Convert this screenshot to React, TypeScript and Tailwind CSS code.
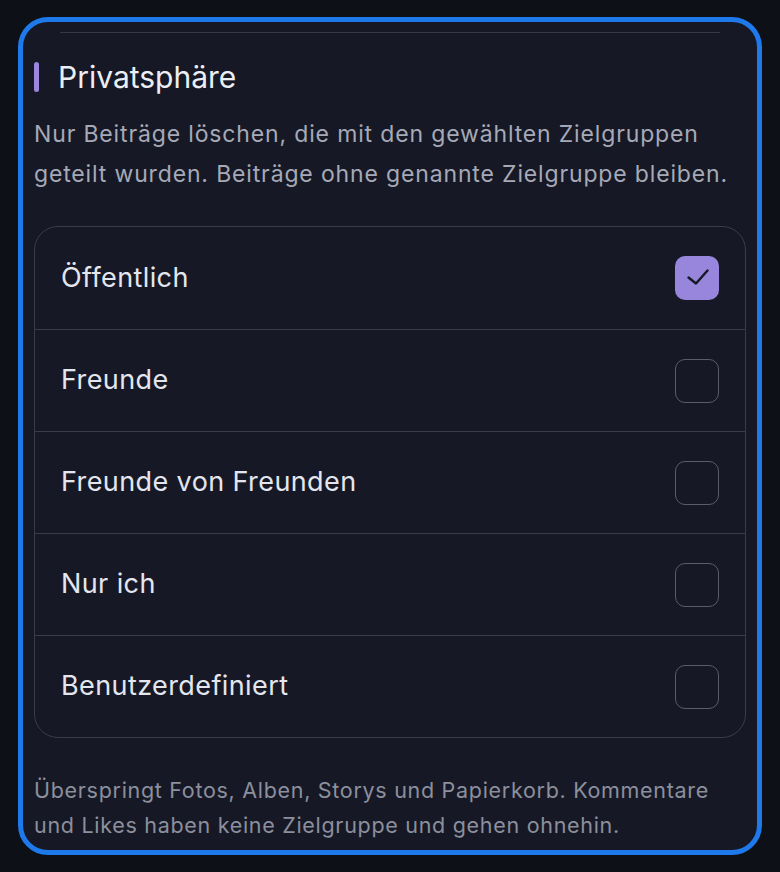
import { useState } from "react";

const audiences = [
    "Öffentlich",
    "Freunde",
    "Freunde von Freunden",
    "Nur ich",
    "Benutzerdefiniert",
];

function CheckMark() {
    return (
        <svg width="44" height="44" viewBox="0 0 44 44" fill="none">
            <polyline
                points="13.5,21.5 21,27.5 32.5,14.5"
                stroke="#161925"
                strokeWidth="2.4"
                strokeLinecap="round"
                strokeLinejoin="round"
            />
        </svg>
    );
}

export default function App() {
    const [selected, setSelected] = useState<string[]>(["Öffentlich"]);

    const toggle = (name: string) => {
        setSelected((prev) =>
            prev.includes(name) ? prev.filter((n) => n !== name) : [...prev, name]
        );
    };

    return (
        <div
            className="min-h-screen bg-[#0d1017] pt-[17px] px-[18px] pb-[18px]"
            style={{ fontFamily: "Inter, 'Noto Sans', sans-serif" }}
        >
            <div className="rounded-[30px] border-[5px] border-[#1e7aeb] bg-[#161925] px-[11px] pb-[7px]">
                {/* tail of the previous section */}
                <div className="mt-[10px] mx-[26px] h-px bg-[#363945]" />

                {/* section header */}
                <div className="mt-[24px] flex items-center gap-[19px] h-[40px]">
                    <span className="w-[5px] h-[30px] rounded-full bg-[#9a85df]" />
                    <h2 className="text-[30px] leading-[40px] text-[#eceef5] font-normal">
                        Privatsphäre
                    </h2>
                </div>

                <p className="mt-[17px] text-[23px] leading-[40px] tracking-[0.85px] text-[#a6a9b7]">
                    Nur Beiträge löschen, die mit den gewählten Zielgruppen geteilt wurden. Beiträge ohne genannte Zielgruppe bleiben.
                </p>

                {/* audience options */}
                <div className="mt-[32px] rounded-[24px] border-[1.5px] border-[#3a3d49] overflow-hidden">
                    {audiences.map((name, i) => {
                        const checked = selected.includes(name);
                        return (
                            <button
                                key={name}
                                type="button"
                                onClick={() => toggle(name)}
                                className={`w-full h-[102px] flex items-center justify-between pl-[26px] pr-[26px] text-left ${i > 0 ? "border-t-[1.5px] border-[#3a3d49]" : ""}`}
                            >
                                <span className="text-[27px] tracking-[0.4px] text-[#e4e6ef]">{name}</span>
                                {checked ? (
                                    <span className="w-[44px] h-[44px] rounded-[10px] bg-[#9886dc] flex items-center justify-center">
                                        <CheckMark />
                                    </span>
                                ) : (
                                    <span className="w-[44px] h-[44px] rounded-[10px] border-[1.5px] border-[#5a5d69]" />
                                )}
                            </button>
                        );
                    })}
                </div>

                <p className="mt-[35px] text-[21.5px] leading-[35px] tracking-[0.7px] text-[#8c8f9d]">
                    Überspringt Fotos, Alben, Storys und Papierkorb. Kommentare und Likes haben keine Zielgruppe und gehen ohnehin.
                </p>
            </div>
        </div>
    );
}
